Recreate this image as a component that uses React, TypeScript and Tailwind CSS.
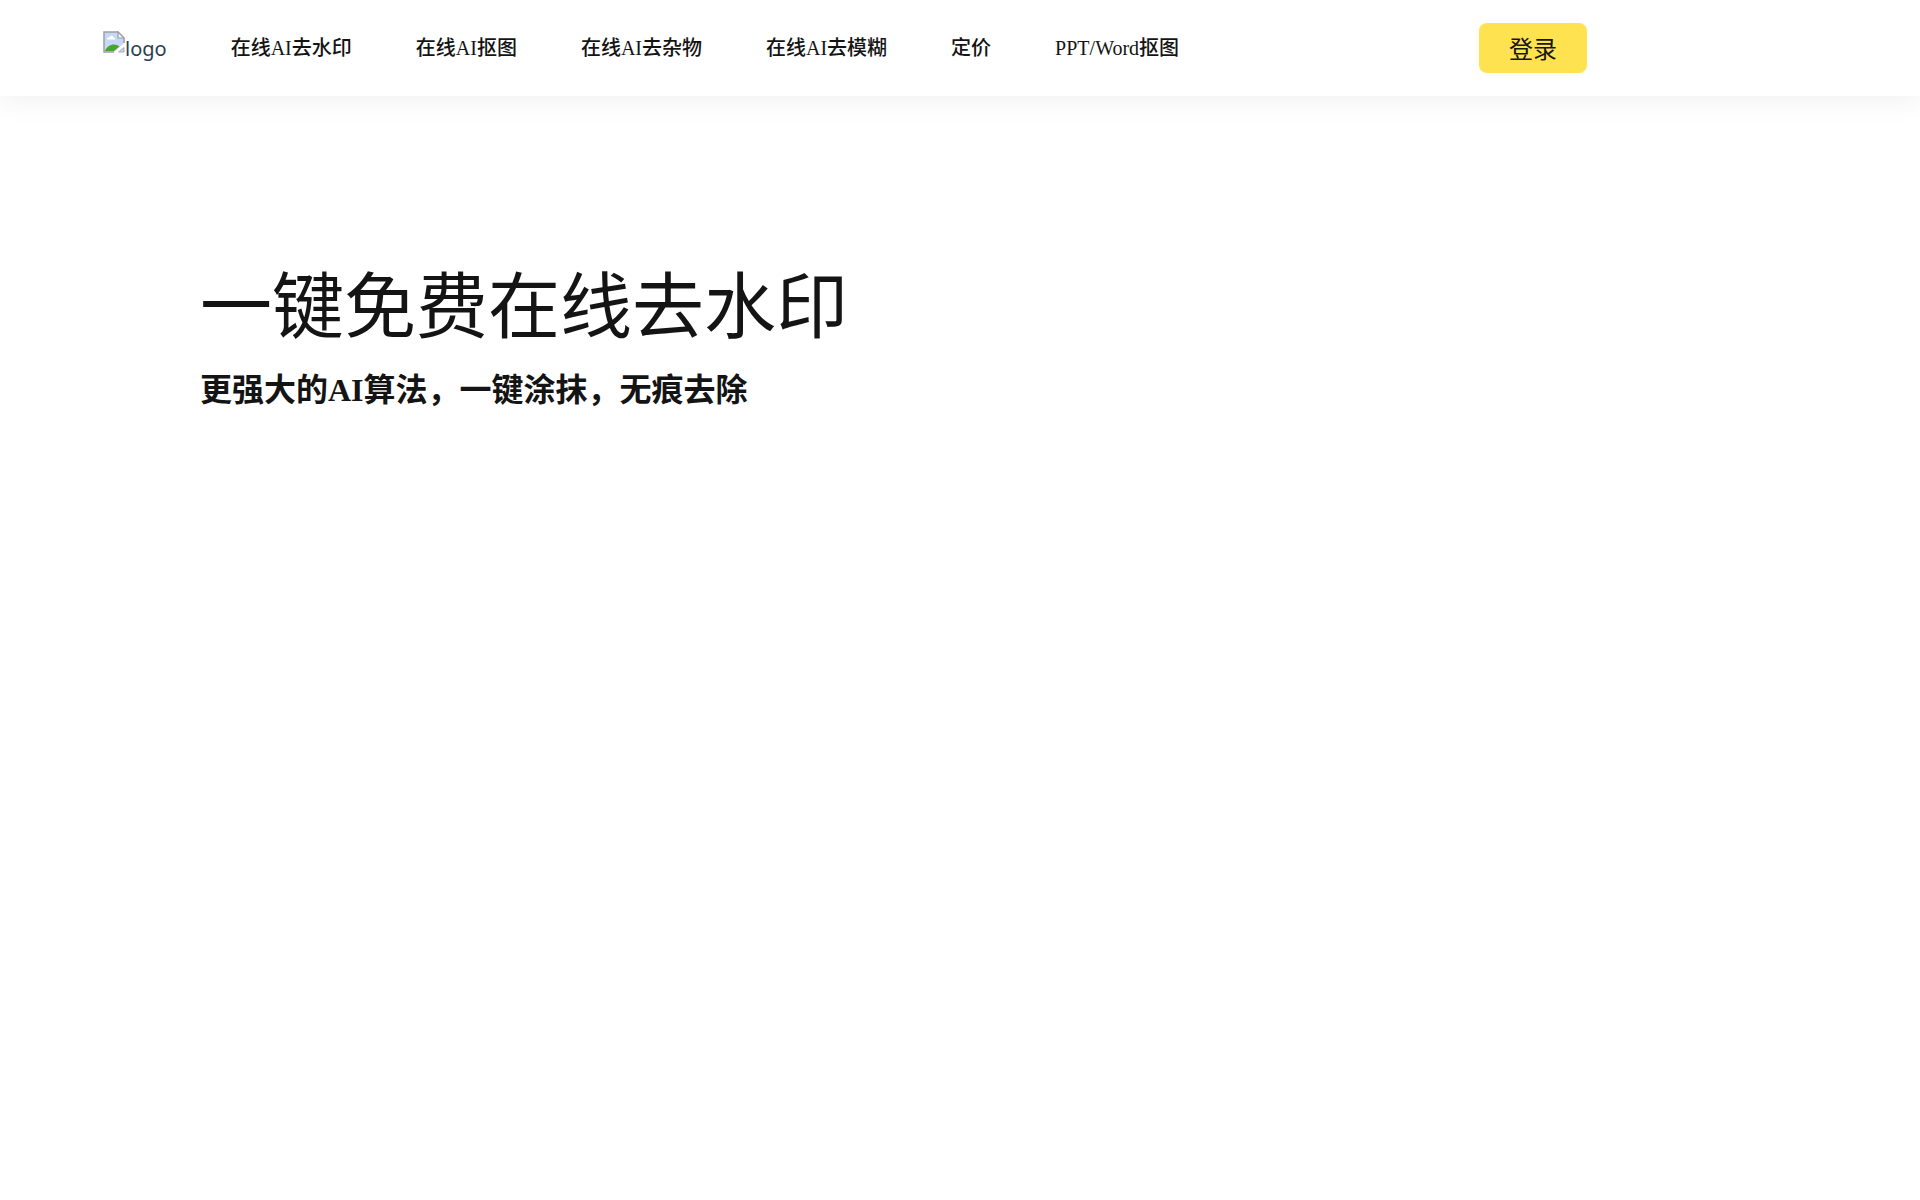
const navLinks = [
  { href: "#watermark", label: "在线AI去水印" },
  { href: "#cutout", label: "在线AI抠图" },
  { href: "#cleanup", label: "在线AI去杂物" },
  { href: "#deblur", label: "在线AI去模糊" },
  { href: "#pricing", label: "定价" },
  { href: "#office", label: "PPT/Word抠图" },
];

function Logo() {
  return (
    <a href="#home" className="flex shrink-0 items-start pt-0.5 font-['Noto_Sans',sans-serif] text-xl leading-9 text-[#2c3e50]">
      <svg className="h-[22px] w-[22px]" viewBox="0 0 22 22" fill="none" aria-hidden="true">
        <path d="M1 1h14l6 6v5L11 21H1z" fill="#c6d7f7" />
        <path d="M4 8.500C4 6.500 5.500 6 6.500 6.500 7 4 10 4 10.500 6.500 12 6.500 12.500 8 12 8.500z" fill="#fff" />
        <path d="M2 20c1.500-4 5-6.500 9-6.500 2 0 4 .7 5.500 2L11 20z" fill="#46a62d" />
        <path d="M11 21H1V1h14l6 6v5" stroke="#a0a0a0" strokeWidth="1.500" />
        <path d="M15 1v6h6z" fill="#f5f5f5" stroke="#a0a0a0" strokeWidth="1.200" />
        <path d="M15.500 21l5.500-4.500V21z" fill="#c6d7f7" stroke="#a0a0a0" strokeWidth=".8" />
      </svg>
      <span>logo</span>
    </a>
  );
}

function Navbar() {
  return (
    <header className="bg-white shadow-[0_2px_30px_rgba(0,0,0,0.07)]">
      <nav className="flex h-24 items-center pl-[103px] pr-[333px]">
        <Logo />
        <div className="ml-16 flex items-center gap-16">
          {navLinks.map(({ href, label }) => (
            <a key={href} href={href} className="whitespace-nowrap text-xl font-medium text-[#141414]">
              {label}
            </a>
          ))}
        </div>
        <button type="button" className="ml-auto h-[50px] w-[108px] rounded-lg bg-[#ffe250] pt-1 text-2xl text-[#141414]">
          登录
        </button>
      </nav>
    </header>
  );
}

export default function App() {
  return (
    <div className="min-h-screen bg-white font-['Liberation_Serif','Noto_Sans_CJK_SC',serif] text-[#141414]">
      <Navbar />
      <main className="px-[200px] pt-40">
        <h1 className="text-7xl leading-[104px]">一键免费在线去水印</h1>
        <h2 className="mt-1.5 text-[32px] font-bold leading-[48px]">更强大的AI算法，一键涂抹，无痕去除</h2>
      </main>
    </div>
  );
}
